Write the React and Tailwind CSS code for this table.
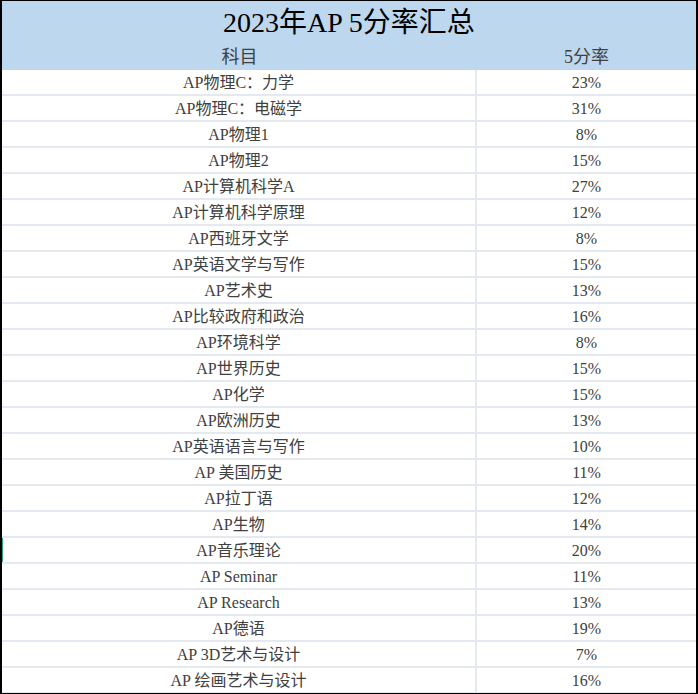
const rows = [
  ['AP物理C：力学', '23%'],
  ['AP物理C：电磁学', '31%'],
  ['AP物理1', '8%'],
  ['AP物理2', '15%'],
  ['AP计算机科学A', '27%'],
  ['AP计算机科学原理', '12%'],
  ['AP西班牙文学', '8%'],
  ['AP英语文学与写作', '15%'],
  ['AP艺术史', '13%'],
  ['AP比较政府和政治', '16%'],
  ['AP环境科学', '8%'],
  ['AP世界历史', '15%'],
  ['AP化学', '15%'],
  ['AP欧洲历史', '13%'],
  ['AP英语语言与写作', '10%'],
  ['AP 美国历史', '11%'],
  ['AP拉丁语', '12%'],
  ['AP生物', '14%'],
  ['AP音乐理论', '20%'],
  ['AP Seminar', '11%'],
  ['AP Research', '13%'],
  ['AP德语', '19%'],
  ['AP 3D艺术与设计', '7%'],
  ['AP 绘画艺术与设计', '16%'],
]

const font = { fontFamily: '"Liberation Serif", "Noto Sans CJK SC", serif' }

export default function App() {
  return (
    <div
      className="w-[698px] h-[694px] overflow-hidden border-x-2 border-y border-black bg-white"
      style={font}
    >
      <div className="bg-[#bdd7ee]">
        <div className="flex h-[43px] items-center justify-center text-[28px] leading-none text-black">
          2023年AP 5分率汇总
        </div>
        <div className="grid h-[26px] grid-cols-[475px_1fr] items-center text-[18px] leading-none text-[#404040]">
          <div className="text-center">科目</div>
          <div className="text-center">5分率</div>
        </div>
      </div>
      <div>
        {rows.map(([name, rate], i) => (
          <div
            key={name}
            className="relative grid h-[26px] grid-cols-[475px_1fr] border-b-2 border-[#e3e8f1] text-[16px] leading-none text-[#404040]"
          >
            {i === 18 && <div className="absolute -left-px top-0 h-full w-[2px] bg-[#1fa56e]" />}
            <div className="flex items-center justify-center pt-px border-r-2 border-[#e3e8f1]">{name}</div>
            <div className="flex items-center justify-center pt-px">{rate}</div>
          </div>
        ))}
      </div>
    </div>
  )
}
